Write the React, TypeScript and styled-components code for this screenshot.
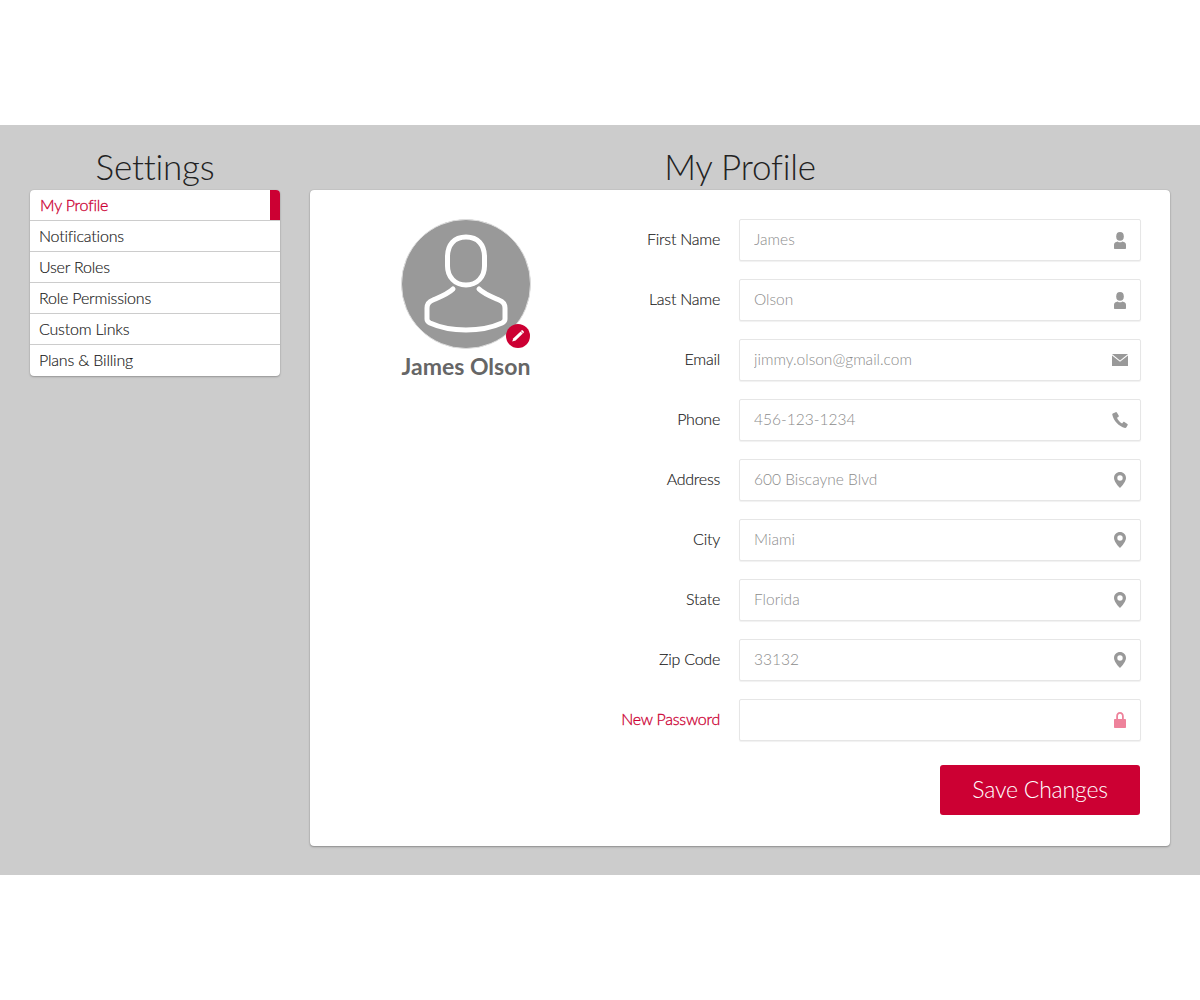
import React from "react";
import styled, { createGlobalStyle } from "styled-components";

const Global = createGlobalStyle`
  html, body { margin: 0; padding: 0; background: #fff; }
  body { font-family: Lato, "Open Sans", "Liberation Sans", sans-serif; font-weight: 300; color: #222; }
  * { box-sizing: border-box; }
`;

const Page = styled.div`
  height: 1000px;
  padding: 125px 0;
  background: #fff;
`;
const Band = styled.main`
  height: 750px;
  background: #ccc;
  padding: 22px 30px 0;
  display: grid;
  grid-template-columns: 250px 860px;
  column-gap: 30px;
  align-items: start;
`;
const Column = styled.section`
  display: flex;
  flex-direction: column;
`;
const Title = styled.h1`
  margin: 0;
  height: 43px;
  line-height: 38px;
  font-size: 35px;
  font-weight: 300;
  letter-spacing: -0.2px;
  text-align: center;
  color: #222;
`;
const Menu = styled.nav`
  background: #fff;
  border-radius: 4px;
  box-shadow: 0 0 1px rgba(0, 0, 0, 0.2), 0 1px 2px rgba(0, 0, 0, 0.25);
  overflow: hidden;
`;
const MenuItem = styled.a<{ $active?: boolean }>`
  display: block;
  position: relative;
  height: 31px;
  line-height: 30px;
  padding-left: ${(p) => (p.$active ? 10 : 9)}px;
  font-size: 16px;
  letter-spacing: -0.2px;
  color: ${(p) => (p.$active ? "#cc0033" : "#1a1a1a")};
  -webkit-text-stroke: ${(p) => (p.$active ? 0.3 : 0.15)}px currentColor;
  border-bottom: 1px solid #ccc;
  &:last-child { border-bottom: none; }
  ${(p) =>
    p.$active &&
    `&::after {
      content: "";
      position: absolute;
      right: 0;
      top: 0;
      width: 10px;
      height: 30px;
      background: #cc0033;
    }`}
`;
const Card = styled.div`
  height: 656px;
  background: #fff;
  border-radius: 4px;
  box-shadow: 0 0 1px rgba(0, 0, 0, 0.25), 0 1px 2px rgba(0, 0, 0, 0.3);
  padding: 29px 29px 0 30px;
  display: flex;
`;
const ProfileSide = styled.div`
  flex: none;
  width: 252px;
  display: flex;
  flex-direction: column;
  align-items: center;
`;
const AvatarWrap = styled.div`
  position: relative;
  width: 130px;
  height: 130px;
`;
const Avatar = styled.div`
  width: 130px;
  height: 130px;
  border-radius: 50%;
  background: #999;
  border: 1px solid #ddd;
  display: flex;
  align-items: center;
  justify-content: center;
`;
const EditBadge = styled.span`
  position: absolute;
  right: 1px;
  bottom: 1px;
  width: 24px;
  height: 24px;
  border-radius: 50%;
  background: #cc0033;
  display: flex;
  align-items: center;
  justify-content: center;
`;
const Name = styled.div`
  margin-top: 2px;
  font-size: 23px;
  line-height: 30px;
  font-weight: 700;
  color: #666;
`;
const FormSide = styled.form`
  flex: 1;
  display: flex;
  flex-direction: column;
  gap: 18px;
`;
const Row = styled.div`
  display: grid;
  grid-template-columns: 128px 402px;
  column-gap: 19px;
  align-items: center;
`;
const Label = styled.label<{ $danger?: boolean }>`
  text-align: right;
  padding-bottom: 4px;
  font-size: 16px;
  letter-spacing: -0.25px;
  color: ${(p) => (p.$danger ? "#cc0033" : "#1a1a1a")};
  -webkit-text-stroke: ${(p) => (p.$danger ? 0.3 : 0.15)}px currentColor;
`;
const InputBox = styled.div`
  height: 42px;
  position: relative;
`;
const Input = styled.input`
  width: 100%;
  height: 100%;
  border: 1px solid #e6e6e6;
  border-radius: 2px;
  box-shadow: 0 1px 1px rgba(0, 0, 0, 0.06);
  padding: 0 44px 3px 14px;
  font: 300 15.5px Lato, sans-serif;
  color: #8c8c8c;
  outline: none;
  &::placeholder { color: #8c8c8c; opacity: 1; }
`;
const IconSlot = styled.span<{ $danger?: boolean }>`
  position: absolute;
  right: 12px;
  top: 12px;
  width: 18px;
  height: 18px;
  display: flex;
  align-items: center;
  justify-content: center;
  color: ${(p) => (p.$danger ? "#ee829b" : "#999")};
`;
const Actions = styled.div`
  display: flex;
  justify-content: flex-end;
  margin-top: 6px;
  padding-right: 1px;
`;
const SaveButton = styled.button`
  width: 200px;
  height: 50px;
  border: none;
  border-radius: 3px;
  background: #cc0033;
  color: #fff;
  padding: 0 0 2px;
  font: 300 23px Lato, sans-serif;
  letter-spacing: -0.2px;
`;

const PersonIcon = () => (
  <svg width="12" height="17" viewBox="0 0 12 17" fill="currentColor">
    <ellipse cx="6" cy="4.4" rx="3.8" ry="4.4" />
    <path d="M0 16v-3.200c0-2 1.600-3 3.600-3.400.8.600 1.600.9 2.400.9s1.600-.3 2.400-.9c2 .4 3.600 1.400 3.600 3.400V16c0 .6-.4 1-1 1H1c-.6 0-1-.4-1-1z" />
  </svg>
);
const MailIcon = () => (
  <svg width="16" height="12" viewBox="0 0 16 12" fill="currentColor">
    <path d="M0 0h16L8 6.400z" />
    <path d="M0 1.600V12h16V1.600L8 7.800z" />
  </svg>
);
const PhoneIcon = () => (
  <svg width="16" height="16" viewBox="0 0 16 16" fill="currentColor">
    <path d="M3.700.2.800 1.400C.3 1.700.1 2.200.3 2.800 1.700 8.800 6.700 14.600 13 15.900c.6.100 1.100-.1 1.400-.6l1.300-2.300c.2-.4.100-.9-.3-1.100l-3-1.900c-.4-.2-.8-.2-1.100.1l-1.200 1.300C8 10.600 5.800 8 5 5.800l1.400-.9c.4-.3.5-.7.400-1.100L5 .7C4.700.2 4.200 0 3.700.2z" />
  </svg>
);
const PinIcon = () => (
  <svg width="12" height="16" viewBox="0 0 12 16" fill="currentColor">
    <path fillRule="evenodd" d="M6 0c3.300 0 6 2.600 6 5.900 0 3.300-3.600 7.500-6 10.100C3.600 13.400 0 9.200 0 5.900 0 2.600 2.700 0 6 0zm0 3.300a2.700 2.700 0 1 0 0 5.400 2.700 2.700 0 0 0 0-5.400z" />
  </svg>
);
const LockIcon = () => (
  <svg width="12" height="16" viewBox="0 0 12 16" fill="currentColor">
    <path fillRule="evenodd" d="M2.200 7V4.200C2.200 1.800 3.700 0 6 0s3.800 1.800 3.800 4.200V7h1.400c.5 0 .8.300.8.800v7.400c0 .5-.3.800-.8.800H.8c-.5 0-.8-.3-.8-.8V7.800C0 7.300.3 7 .8 7h1.400zm1.800 0h4V4.300C8 2.900 7.300 1.800 6 1.800S4 2.900 4 4.300V7z" />
  </svg>
);
const PencilIcon = () => (
  <svg width="14" height="14" viewBox="0 0 14 14" fill="#fff">
    <path d="M9.600 2.400l2.200 2.200-7.200 6.800-3.400 1.200 1.200-3.400z" />
    <path d="M10.400 1.600c.5-.5 1-.5 1.400-.1l.9.9c.4.400.4.900-.1 1.400l-.5.500-2.200-2.200z" />
  </svg>
);
const UserOutline = () => (
  <svg width="130" height="130" viewBox="0 0 130 130" fill="none" stroke="#fff" strokeWidth="5" strokeLinecap="round" strokeLinejoin="round" style={{ margin: "-1px" }}>
    <path d="M65 18c-12 0-18.500 8-18.500 20v9c0 11 7.500 19 18.500 19s18.500-8 18.500-19v-9c0-12-6.500-20-18.500-20z" />
    <path d="M52 70c-5 5-13 8-20 11-4 1.500-6 4-6 8v11c0 2 1 3 3 4 11 5 23 7 36 7s25-2 36-7c2-1 3-2 3-4V89c0-4-2-6.500-6-8-7-3-15-6-20-11" />
  </svg>
);

const fields: { label: string; value: string; icon: React.ReactNode; danger?: boolean }[] = [
  { label: "First Name", value: "James", icon: <PersonIcon /> },
  { label: "Last Name", value: "Olson", icon: <PersonIcon /> },
  { label: "Email", value: "jimmy.olson@gmail.com", icon: <MailIcon /> },
  { label: "Phone", value: "456-123-1234", icon: <PhoneIcon /> },
  { label: "Address", value: "600 Biscayne Blvd", icon: <PinIcon /> },
  { label: "City", value: "Miami", icon: <PinIcon /> },
  { label: "State", value: "Florida", icon: <PinIcon /> },
  { label: "Zip Code", value: "33132", icon: <PinIcon /> },
  { label: "New Password", value: "", icon: <LockIcon />, danger: true },
];

const menu = ["My Profile", "Notifications", "User Roles", "Role Permissions", "Custom Links", "Plans & Billing"];

export default function App() {
  return (
    <Page>
      <Global />
      <Band>
        <Column>
          <Title>Settings</Title>
          <Menu>
            {menu.map((m, i) => (
              <MenuItem key={m} $active={i === 0}>{m}</MenuItem>
            ))}
          </Menu>
        </Column>
        <Column>
          <Title>My Profile</Title>
          <Card>
            <ProfileSide>
              <AvatarWrap>
                <Avatar><UserOutline /></Avatar>
                <EditBadge><PencilIcon /></EditBadge>
              </AvatarWrap>
              <Name>James Olson</Name>
            </ProfileSide>
            <FormSide>
              {fields.map((f) => (
                <Row key={f.label}>
                  <Label $danger={f.danger}>{f.label}</Label>
                  <InputBox>
                    <Input placeholder={f.value} />
                    <IconSlot $danger={f.danger}>{f.icon}</IconSlot>
                  </InputBox>
                </Row>
              ))}
              <Actions>
                <SaveButton type="button">Save Changes</SaveButton>
              </Actions>
            </FormSide>
          </Card>
        </Column>
      </Band>
    </Page>
  );
}
